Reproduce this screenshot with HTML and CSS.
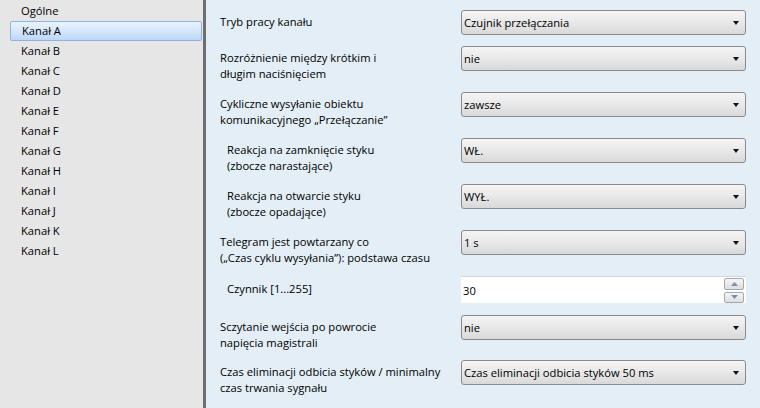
FILE: index.html
```html
<!DOCTYPE html>
<html lang="pl">
<head>
<meta charset="utf-8">
<title>Kanał A</title>
<link rel="stylesheet" href="styles.css">
</head>
<body>
<div class="app">
  <nav class="sidebar">
    <ul class="nav-list">
      <li class="nav-item">Ogólne</li>
      <li class="nav-item selected">Kanał A</li>
      <li class="nav-item">Kanał B</li>
      <li class="nav-item">Kanał C</li>
      <li class="nav-item">Kanał D</li>
      <li class="nav-item">Kanał E</li>
      <li class="nav-item">Kanał F</li>
      <li class="nav-item">Kanał G</li>
      <li class="nav-item">Kanał H</li>
      <li class="nav-item">Kanał I</li>
      <li class="nav-item">Kanał J</li>
      <li class="nav-item">Kanał K</li>
      <li class="nav-item">Kanał L</li>
    </ul>
  </nav>
  <main class="params">
    <div class="row row-single">
      <div class="label">Tryb pracy kanału</div>
      <div class="select"><span class="value">Czujnik przełączania</span><span class="arrow"></span></div>
    </div>
    <div class="row">
      <div class="label">Rozróżnienie między krótkim i<br>długim naciśnięciem</div>
      <div class="select"><span class="value">nie</span><span class="arrow"></span></div>
    </div>
    <div class="row">
      <div class="label">Cykliczne wysyłanie obiektu<br>komunikacyjnego „Przełączanie”</div>
      <div class="select"><span class="value">zawsze</span><span class="arrow"></span></div>
    </div>
    <div class="row">
      <div class="label indent">Reakcja na zamknięcie styku<br>(zbocze narastające)</div>
      <div class="select"><span class="value">WŁ.</span><span class="arrow"></span></div>
    </div>
    <div class="row">
      <div class="label indent">Reakcja na otwarcie styku<br>(zbocze opadające)</div>
      <div class="select"><span class="value">WYŁ.</span><span class="arrow"></span></div>
    </div>
    <div class="row">
      <div class="label">Telegram jest powtarzany co<br>(„Czas cyklu wysyłania”): podstawa czasu</div>
      <div class="select"><span class="value">1 s</span><span class="arrow"></span></div>
    </div>
    <div class="row row-input">
      <div class="label indent label-input">Czynnik [1...255]</div>
      <div class="spin-input">
        <span class="value">30</span>
        <div class="spin-buttons">
          <span class="spin-btn"><svg width="7" height="4" viewBox="0 0 7 4"><path d="M0 4 L3.5 0 L7 4 Z" fill="#7a8fb3"/></svg></span>
          <span class="spin-btn"><svg width="7" height="4" viewBox="0 0 7 4"><path d="M0 0 L7 0 L3.5 4 Z" fill="#7a8fb3"/></svg></span>
        </div>
      </div>
    </div>
    <div class="row row-tight">
      <div class="label">Sczytanie wejścia po powrocie<br>napięcia magistrali</div>
      <div class="select"><span class="value">nie</span><span class="arrow"></span></div>
    </div>
    <div class="row">
      <div class="label">Czas eliminacji odbicia styków / minimalny<br>czas trwania sygnału</div>
      <div class="select"><span class="value">Czas eliminacji odbicia styków 50 ms</span><span class="arrow"></span></div>
    </div>
  </main>
</div>
</body>
</html>
```
FILE: styles.css
```css
* { box-sizing: border-box; }
html, body {
  margin: 0;
  padding: 0;
  width: 760px;
  height: 408px;
  overflow: hidden;
}
body {
  font-family: "Open Sans", "Noto Sans", sans-serif;
  font-size: 11.2px;
  color: #000;
}
.app {
  display: flex;
  height: 408px;
}
.sidebar {
  width: 206px;
  flex: none;
  background: #e6e6e6;
  border-right: 3px solid #6e6e6e;
}
.nav-list {
  list-style: none;
  margin: 0;
  padding: 1px 0 0 0;
}
.nav-item {
  height: 20px;
  line-height: 20px;
  margin-left: 10px;
  margin-right: 1px;
  padding-left: 11px;
}
.nav-item.selected {
  border: 1px solid #8db2e3;
  border-radius: 2px;
  padding-left: 11px;
  line-height: 18px;
  background: linear-gradient(#eaf3fd, #d5e7fb 50%, #bcd7f7);
}
.params {
  flex: 1;
  background: #e3eef6;
  padding: 10px 0 0 14px;
}
.row {
  display: flex;
  align-items: flex-start;
  margin-bottom: 10px;
}
.row-single { margin-bottom: 11px; }
.row-input { margin-bottom: 12px; }
.row-tight { margin-bottom: 9px; }
.label {
  width: 241px;
  flex: none;
  line-height: 16px;
  padding-top: 4px;
}
.label.indent { padding-left: 7px; }
.label-input { padding-top: 5px; }
.select {
  width: 285px;
  height: 25px;
  display: flex;
  align-items: center;
  justify-content: space-between;
  border: 1px solid #8a8a8a;
  border-radius: 3px;
  background: linear-gradient(#f5f5f5, #e8e8e8 50%, #d9d9d9);
  padding: 0 6px 0 2px;
}
.arrow {
  width: 0;
  height: 0;
  border-left: 3.5px solid transparent;
  border-right: 3.5px solid transparent;
  border-top: 4px solid #111;
  margin-top: 1px;
}
.spin-input {
  width: 285px;
  height: 27px;
  display: flex;
  align-items: center;
  justify-content: space-between;
  background: #fff;
  border-top: 1px solid #d0d6dc;
  padding: 0 2px 0 2px;
}
.spin-buttons {
  display: flex;
  flex-direction: column;
  gap: 2px;
}
.spin-btn {
  width: 20px;
  height: 12px;
  display: flex;
  align-items: center;
  justify-content: center;
  border: 1px solid #a4a9ae;
  border-radius: 2px;
  background: linear-gradient(#f6f6f6, #dedede);
}
.spin-btn + .spin-btn { height: 11px; }
```
